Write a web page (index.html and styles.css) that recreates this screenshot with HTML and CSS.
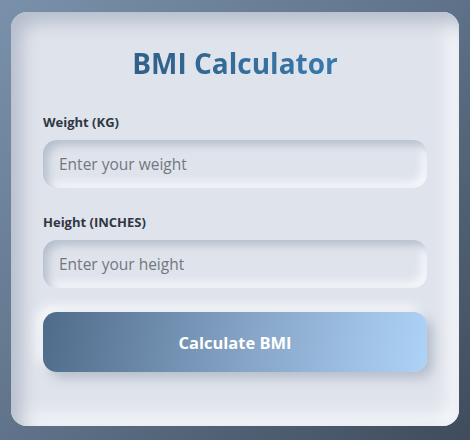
FILE: index.html
```html
<!DOCTYPE html>
<html lang="en">
<head>
<meta charset="utf-8">
<title>BMI Calculator</title>
<link rel="stylesheet" href="styles.css">
</head>
<body>
  <main class="card">
    <h1 class="title">BMI Calculator</h1>
    <form class="form">
      <div class="field">
        <label class="label" for="weight">Weight (KG)</label>
        <input class="input" id="weight" type="text" placeholder="Enter your weight">
      </div>
      <div class="field">
        <label class="label" for="height">Height (INCHES)</label>
        <input class="input" id="height" type="text" placeholder="Enter your height">
      </div>
      <button class="button" type="button">Calculate BMI</button>
    </form>
  </main>
</body>
</html>
```
FILE: styles.css
```css
* { box-sizing: border-box; }
html, body { margin: 0; height: 100%; }
body {
  font-family: "Open Sans", "Noto Sans", sans-serif;
  background: linear-gradient(135deg, #7a91ab 0%, #5f7289 50%, #3f4c5c 100%);
  padding: 12px 11px 14px 11px;
  display: flex;
}
.card {
  flex: 1;
  background: #dfe3eb;
  border-radius: 16px;
  padding: 32px 32px 54px 32px;
  box-shadow: inset 10px 10px 18px #b4bdcb, inset -10px -10px 18px #f6f8fb;
}
.title {
  margin: 0 0 32px 0;
  text-align: center;
  font-size: 28px;
  line-height: 38px;
  font-weight: 700;
  background: linear-gradient(90deg, #2c5578, #3b84bc);
  -webkit-background-clip: text;
  background-clip: text;
  color: transparent;
}
.form { display: flex; flex-direction: column; }
.field { display: flex; flex-direction: column; margin-bottom: 26px; }
.field:nth-child(2) { margin-bottom: 24px; }
.label {
  font-size: 13px;
  line-height: 16px;
  font-weight: 700;
  color: #2f3744;
  margin-bottom: 10px;
}
.input {
  height: 48px;
  border: none;
  outline: none;
  border-radius: 14px;
  background: #dfe3eb;
  padding: 0 16px;
  font-family: inherit;
  font-size: 15.5px;
  color: #333;
  box-shadow: inset 5px 5px 9px #b6bfcd, inset -5px -5px 9px #f7f9fc;
}
.input::placeholder { color: #737780; }
.button {
  height: 60px;
  border: none;
  border-radius: 14px;
  background: linear-gradient(100deg, #4f6b8a 0%, #87a6c8 55%, #aed3f8 100%);
  color: #fff;
  font-family: inherit;
  font-size: 16.5px;
  font-weight: 700;
  box-shadow: 6px 6px 12px #b4bdcb, -6px -6px 12px #f8fafc;
  cursor: pointer;
}
```
